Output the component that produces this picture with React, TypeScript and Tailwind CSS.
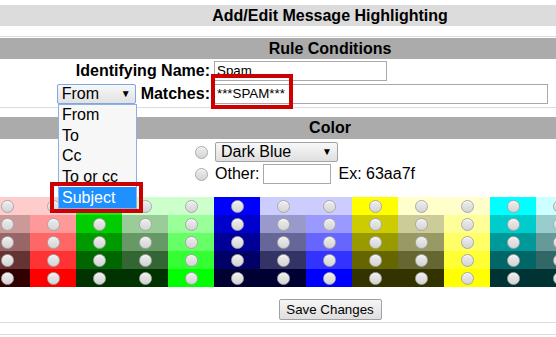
import React from "react";

const grid: string[][] = [
  ["bg-[#ffcccc]", "bg-[#ffcccc]", "bg-[#00ff00]", "bg-[#ccffcc]", "bg-[#ccffcc]", "bg-[#0000ff]", "bg-[#ccccff]", "bg-[#ccccff]", "bg-[#ffff00]", "bg-[#ffffcc]", "bg-[#ffffcc]", "bg-[#00ffff]", "bg-[#ccffff]", "bg-[#ccffff]", "bg-[#ff00ff]"],
  ["bg-[#cc9999]", "bg-[#ff9999]", "bg-[#00cc00]", "bg-[#99cc99]", "bg-[#99ff99]", "bg-[#0000cc]", "bg-[#9999cc]", "bg-[#9999ff]", "bg-[#cccc00]", "bg-[#cccc99]", "bg-[#ffff99]", "bg-[#00cccc]", "bg-[#99cccc]", "bg-[#99ffff]", "bg-[#cc00cc]"],
  ["bg-[#996666]", "bg-[#ff6666]", "bg-[#009900]", "bg-[#669966]", "bg-[#66ff66]", "bg-[#000099]", "bg-[#666699]", "bg-[#6666ff]", "bg-[#999900]", "bg-[#999966]", "bg-[#ffff66]", "bg-[#009999]", "bg-[#669999]", "bg-[#66ffff]", "bg-[#990099]"],
  ["bg-[#663333]", "bg-[#ff3333]", "bg-[#006600]", "bg-[#336633]", "bg-[#33ff33]", "bg-[#000066]", "bg-[#333366]", "bg-[#3333ff]", "bg-[#666600]", "bg-[#666633]", "bg-[#ffff33]", "bg-[#006666]", "bg-[#336666]", "bg-[#33ffff]", "bg-[#660066]"],
  ["bg-[#330000]", "bg-[#ff0000]", "bg-[#003300]", "bg-[#003300]", "bg-[#00ff00]", "bg-[#000033]", "bg-[#000033]", "bg-[#0000ff]", "bg-[#333300]", "bg-[#333300]", "bg-[#ffff00]", "bg-[#003333]", "bg-[#003333]", "bg-[#00ffff]", "bg-[#330033]"],
];

function Radio() {
  return (
    <span className="block w-[13px] h-[13px] rounded-full border border-[#a8a8a8] bg-linear-to-b from-[#eeeeee] to-[#d4d4d4] shadow-[inset_0_1px_0_rgba(255,255,255,0.7)]" />
  );
}

export default function App() {
  return (
    <div className="relative w-[556px] h-[337px] overflow-hidden bg-white text-black font-['Liberation_Sans',Arial,sans-serif]">
      <div className="relative w-[660px] pt-[5px]">
        <div className="h-[21px] bg-[#dcdcdc] flex items-center justify-center text-[16px] font-bold leading-none">
          Add/Edit Message Highlighting
        </div>
        <div className="mt-[10px] h-px bg-[#dcdcdc]" />
        <div className="mt-px h-[21px] bg-[#ababab] flex items-center justify-center text-[16px] font-bold leading-none">
          Rule Conditions
        </div>

        <div className="mt-[2px] flex items-center h-[20px]">
          <div className="w-[210px] text-right text-[16px] font-bold leading-none">Identifying Name:</div>
          <div className="ml-[4px] w-[173px] h-[20px] border border-[#a9a9a9] text-[13.33px] leading-[18px] px-[2px] overflow-hidden">Spam</div>
        </div>

        <div className="mt-[3px] flex items-center h-[20px]">
          <div className="w-[210px] flex items-center justify-end gap-[5px]">
            <div className="w-[79px] h-[20px] rounded-[2px] border border-[#7fa7e0] bg-linear-to-b from-[#f7f7f7] to-[#e2e2e2] flex items-center justify-between pl-[4px] pr-[4px]">
              <span className="text-[16px] leading-none">From</span>
              <span className="text-[10px] leading-none">▼</span>
            </div>
            <span className="text-[16px] font-bold leading-none">Matches:</span>
          </div>
          <div className="ml-[4px] w-[334px] h-[20px] border border-[#a9a9a9] text-[13.33px] leading-[18px] px-[2px] overflow-hidden">***SPAM***</div>
        </div>

        <div className="mt-[3px] h-px bg-[#dcdcdc]" />

        <div className="mt-[9px] h-[22px] bg-[#ababab] flex items-center justify-center text-[16px] font-bold leading-none">
          Color
        </div>

        <div className="pl-[195px]">
          <div className="mt-[3px] h-[20px] flex items-center">
            <Radio />
            <div className="ml-[7px] w-[123px] h-[20px] rounded-[2px] border border-[#a3a3a3] bg-linear-to-b from-[#f8f8f8] to-[#dfdfdf] flex items-center justify-between pl-[5px] pr-[5px]">
              <span className="text-[16px] leading-none">Dark Blue</span>
              <span className="text-[10px] leading-none">▼</span>
            </div>
          </div>
          <div className="mt-[2px] h-[20px] flex items-center">
            <Radio />
            <span className="ml-[7px] text-[16px] leading-none">Other:</span>
            <div className="ml-[4px] w-[68px] h-[20px] border border-[#a9a9a9]" />
            <span className="ml-[7px] text-[16px] leading-none">Ex: 63aa7f</span>
          </div>
        </div>

        <div className="mt-[13px] ml-[-16px] w-[690px] flex flex-col">
          {grid.map((row, r) => (
            <div key={r} className="flex">
              {row.map((c, i) => (
                <div key={i} className={`w-[46px] h-[18px] flex items-center justify-center ${c}`}>
                  <Radio />
                </div>
              ))}
            </div>
          ))}
        </div>

        <div className="mt-[12px] flex justify-center">
          <div className="w-[103px] h-[21px] rounded-[2px] border border-[#a0a0a0] bg-linear-to-b from-[#f6f6f6] to-[#dedede] flex items-center justify-center text-[13.33px] leading-none">
            Save Changes
          </div>
        </div>
        <div className="mt-[2px] h-px bg-[#dcdcdc]" />
        <div className="mt-[11px] h-px bg-[#dcdcdc]" />

        <div className="absolute left-[58px] top-[104px] w-[79px] h-[105px] border border-[#8fb0e3] bg-[#f7f7f7] flex flex-col text-[16px]">
          <div className="h-[20.5px] flex items-center pl-[3px] leading-none">From</div>
          <div className="h-[20.5px] flex items-center pl-[3px] leading-none">To</div>
          <div className="h-[20.5px] flex items-center pl-[3px] leading-none">Cc</div>
          <div className="h-[20.5px] flex items-center pl-[3px] leading-none">To or cc</div>
          <div className="h-[21px] flex items-center pl-[3px] leading-none bg-[#1e90ff] text-white">Subject</div>
        </div>

        <div className="absolute left-[211px] top-[74px] w-[82px] h-[35px] border-4 border-[#cc0000]" />
        <div className="absolute left-[50px] top-[182px] w-[93px] h-[31px] border-4 border-[#cc0000]" />
      </div>
    </div>
  );
}
